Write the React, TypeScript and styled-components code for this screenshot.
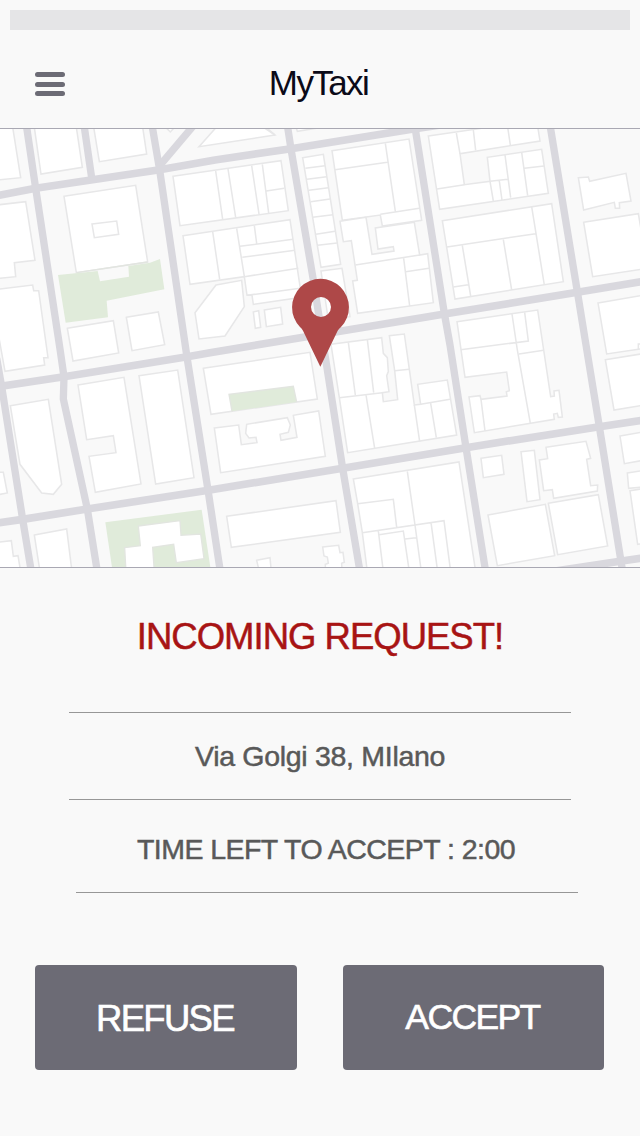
import React from "react";
import styled, { createGlobalStyle } from "styled-components";

const GlobalStyle = createGlobalStyle`
  *, *::before, *::after { box-sizing: border-box; }
  body {
    margin: 0;
    background: #f9f9f9;
    font-family: "Liberation Sans", Arial, Helvetica, sans-serif;
  }
`;

const Screen = styled.main`
  display: flex;
  flex-direction: column;
  width: 640px;
  height: 1136px;
  overflow: hidden;
  background: #f9f9f9;
`;

const StatusBar = styled.div`
  flex: none;
  height: 20px;
  margin: 10px 10px 0;
  background: #e5e5e7;
`;

const Header = styled.header`
  flex: none;
  display: grid;
  grid-template-columns: 100px 1fr 103px;
  height: 98px;
  padding-top: 32px;
`;

const MenuButton = styled.button`
  display: flex;
  flex-direction: column;
  justify-content: space-between;
  align-self: start;
  width: 30px;
  height: 24px;
  margin: 10px 0 0 35px;
  padding: 0;
  border: 0;
  background: none;
`;

const MenuBar = styled.span`
  height: 5px;
  border-radius: 2.5px;
  background: #6c6b75;
`;

const Title = styled.h1`
  margin: 1px 0 0;
  font-size: 35px;
  font-weight: 400;
  line-height: 40px;
  letter-spacing: -1.6px;
  text-align: center;
  color: #0b0a18;
`;

const MapFrame = styled.section`
  flex: none;
  height: 440px;
  border-top: 1px solid #a9a8b3;
  border-bottom: 1px solid #a9a8b3;
  overflow: hidden;
`;

const MapDrawing = styled.svg`
  display: block;
  width: 640px;
  height: 438px;
`;

const Request = styled.section`
  flex: none;
  display: flex;
  flex-direction: column;
  align-items: center;
  height: 325px;
`;

const Alert = styled.h2`
  margin: 49px 0 0;
  font-size: 36.5px;
  font-weight: 400;
  line-height: 40px;
  letter-spacing: -1px;
  white-space: nowrap;
  color: #a81414;
  -webkit-text-stroke: 0.5px #a81414;
`;

const Details = styled.div`
  width: 502px;
  margin-top: 55px;
  border-top: 1px solid #979797;
`;

const Detail = styled.p<{ $height: number; $shift?: number; $spacing: number; $drop?: number }>`
  height: ${(p) => p.$height}px;
  margin: 0 ${(p) => -(p.$shift ?? 0)}px 0 ${(p) => p.$shift ?? 0}px;
  padding-top: ${(p) => p.$drop ?? 0}px;
  padding-right: ${(p) => (p.$shift ? 2 : 0)}px;
  border-bottom: 1px solid #979797;
  font-size: 28.5px;
  line-height: 36px;
  letter-spacing: ${(p) => p.$spacing}px;
  text-align: center;
  white-space: nowrap;
  color: #595959;
  -webkit-text-stroke: 0.5px #595959;
`;

const Actions = styled.div`
  flex: none;
  display: grid;
  grid-template-columns: 262px 261px;
  gap: 46px;
  margin: 72px 0 0 35px;
`;

const ActionButton = styled.button<{ $size: number; $spacing: number; $drop?: number }>`
  height: 105px;
  padding: ${(p) => p.$drop ?? 0}px 2px 0 0;
  border: 0;
  border-radius: 4px;
  background: #6c6b75;
  color: #fff;
  font-family: inherit;
  font-size: ${(p) => p.$size}px;
  letter-spacing: ${(p) => p.$spacing}px;
  -webkit-text-stroke: 0.6px #fff;
`;

/* Map geometry is in thirds of a pixel. */
const avenues = [
  "M79 0L107 190L180 672L192 755L190 822L262 1152L292 1340",
  "M252 0L275 158",
  "M456 0L479 135L560 690L624 1095L661 1340",
  "M582 0L479 122",
  "M862 0L873 72L940 465L975 690L1028 1030L1080 1340",
  "M1244 0L1333 565L1350 660L1398 968L1457 1340",
  "M1650 0L1732 500L1758 660L1798 905L1868 1340",
  "M-10 700L5 785L68 1183L94 1340",
];

const streets = [
  "M-10 212L107 190L479 134L645 105L873 71L1240 12L1320 0",
  "M-10 786L192 755L562 695L630 683L1275 577L1333 567L1732 502L1930 469",
  "M-10 1194L68 1183L262 1152L630 1095L1028 1030L1398 968L1798 905L1930 885",
  "M1660 1339L1865 1308L1930 1299",
];

type Plot = { x: number; y: number; shapes: string[]; walls?: string[] };

const plots: Plot[] = [
  {
    x: 0,
    y: 0,
    shapes: [
      "-10,0 37,0 62,158 -10,165",
      "102,0 123,147 247,127 228,0",
      "280,0 298,110 440,87 427,0",
      "490,0 511,21 530,0",
      "655,0 597,65 825,30 790,0",
      "-10,240 77,230 105,406 43,413 47,455 -10,461",
      "-10,493 98,480 101,497 116,497 144,698 131,698 134,720 15,739 -10,600",
      "192,214 407,181 443,411 229,443",
      "276,297 350,288 356,328 283,338",
      "202,610 340,587 356,684 219,708",
      "379,577 475,561 494,659 396,677",
      "519,154 843,107 865,257 540,302",
      "549,332 870,284 905,517 760,538 756,511 741,511 733,455 570,478",
      "648,480 725,466 733,545 675,633 597,642 585,563",
    ],
  },
  {
    x: 630,
    y: 0,
    shapes: [
      "130,561 146,557 152,607 136,610",
      "163,555 212,547 218,597 169,605",
      "256,0 262,19 390,-2",
      "278,98 340,88 392,418 333,427",
      "333,438 396,430 420,575 355,585",
      "366,77 597,42 635,286 517,303 511,270 397,286",
      "390,289 468,277 486,388 552,378 550,365 504,372 496,309 613,292 629,390 653,386 670,533 443,565 428,468 442,466 424,347 400,350",
    ],
    walls: [
      "M17 138L38 283M54 132L77 277M125 122L147 267M157 118L176 264M169 198L223 190",
      "M8 320L29 463M80 310L103 455M133 302L140 355M90 364L249 343M97 397L255 376M103 455L265 430M111 511L270 490",
      "M286 130L345 122M291 163L350 155M297 196L355 188M302 230L360 222M308 277L369 269M318 328L375 319M323 361L381 354",
      "M526 55L556 259M375 134L532 112M511 268L628 250",
      "M436 420L629 390M581 400L599 543M587 440L657 430M165 10L195 30",
    ],
  },
  {
    x: 1275,
    y: 0,
    shapes: [
      "10,33 170,10 335,-15 345,48 105,86 118,179 195,169 187,97 350,73 370,205 44,253",
      "52,287 380,236 415,470 90,522",
      "460,158 490,156 494,169 603,145 618,228 583,233 584,250 571,250 568,232 476,255",
      "476,292 640,266 668,430 503,455",
      "519,534 670,508 670,668 545,687",
      "541,704 660,685 660,840 567,855",
    ],
    walls: [
      "M94 24L105 86M145 15L152 76M247 0L256 60M118 179L36 192M195 169L248 163M195 169L205 228M223 168L231 225M240 90L257 218M290 82L308 212M298 130L357 123",
      "M320 245L358 480M66 366L332 326M112 362L137 513M235 344L260 495M85 486L130 479",
      "M640 672V657H650",
    ],
  },
  {
    x: 0,
    y: 660,
    shapes: [
      "31,182 145,163 185,418 160,448 125,444 60,358",
      "234,120 372,97 423,417 286,442 267,334 348,323 340,272 260,284",
      "417,92 533,75 582,398 467,417",
      "-10,382 10,382 22,444 -10,450",
      "103,570 200,552 216,680 120,680",
      "-10,592 34,587 40,634 54,632 62,680 -10,680",
      "610,70 930,22 952,162 633,208",
    ],
  },
  {
    x: 630,
    y: 660,
    shapes: [
      "363,-2 515,-22 520,25 532,38 535,80 530,92 537,140 517,143 520,170 563,164 554,77 538,-28 583,-33 598,73 613,180 632,178 623,118 712,105 740,270 413,323 388,158",
      "13,249 86,240 94,299 141,293 138,277 117,279 107,265 110,238 232,218 241,240 235,262 210,268 213,286 261,277 250,211 326,198 346,334 32,383",
      "50,514 378,467 391,562 64,607",
      "140,646 180,638 184,680 148,680",
      "338,606 386,601 390,623 399,622 403,652 395,655 396,680 346,680 346,658 355,655 352,636 342,633",
      "430,402 747,351 797,680 472,680 457,563 443,476",
    ],
    walls: [
      "M415 -8L436 150M472 -16L491 143M388 158L517 143M468 150L494 310M554 77L598 73M613 180L629 290M632 178L720 163M662 175L679 278",
      "M443 476L550 463L560 547M457 563L702 527L722 680M592 379L615 540L634 680M505 558L520 680M507 569L580 558L598 680M585 582L618 578M663 532L683 680",
    ],
  },
  {
    x: 1275,
    y: 660,
    shapes: [
      "96,-70 338,-105 356,15 377,155 388,153 387,138 402,136 412,216 400,217 397,205 386,207 388,223 148,263 132,156 165,152 168,163 246,153 244,140 253,137 245,81 120,97",
      "168,340 230,331 237,388 175,398",
      "288,320 328,316 345,464 306,470",
      "363,307 483,289 497,340 485,343 497,422 518,420 517,438 386,460 382,434 356,437 343,345 368,341",
      "189,510 361,478 389,632 217,662",
      "370,475 520,449 548,603 398,629",
      "585,273 660,260 660,345 598,356",
      "607,384 660,376 660,425 611,430",
      "615,437 660,430 660,595 638,598",
    ],
    walls: ["M261 -93L277 15L316 235M299 -98L310 -12L107 14M282 27L356 16M168 163L180 258"],
  },
];

function CityMap() {
  return (
    <MapDrawing viewBox="0 12 1920 1314" aria-label="Map">
      <g fill="none" stroke="#d9d8de" strokeLinejoin="round">
        {avenues.map((d) => (
          <path key={d} d={d} strokeWidth={22} />
        ))}
        {streets.map((d) => (
          <path key={d} d={d} strokeWidth={23} />
        ))}
      </g>
      {plots.map((plot) => (
        <g
          key={`${plot.x}-${plot.y}`}
          transform={`translate(${plot.x} ${plot.y})`}
          fill="#fff"
          stroke="#e7e7e8"
          strokeWidth={4.6}
        >
          {plot.shapes.map((points) => (
            <polygon key={points} points={points} />
          ))}
          {plot.walls?.map((d) => (
            <path key={d} d={d} fill="none" />
          ))}
        </g>
      ))}
      <g fill="#e0ebda">
        <polygon points="174,450 293,438 300,469 387,455 385,423 450,413 480,402 493,493 320,527 324,577 197,593" />
        <polygon points="316,1192 605,1154 633,1340 338,1340" />
        <polygon points="687,808 880,784 890,831 696,859" />
      </g>
      <g fill="none" stroke="#e2e5e0" strokeWidth={4}>
        <path d="M229 443L443 411" />
        <path d="M696 859L687 808L880 784L890 831" />
        <path
          fill="#fff"
          d="M415 1203L540 1187L543 1231L602 1227L612 1301L529 1313L521 1258L458 1267L463 1340H378L374 1268L421 1262Z"
        />
      </g>
      <path
        fill="#ae4848"
        fillRule="evenodd"
        d="M961 725L909 617Q906 611 900 606A85.3 85.3 0 1 1 1023 606Q1017 611 1013 617ZM963 516A30 30 0 1 0 963 576A30 30 0 1 0 963 516Z"
      />
    </MapDrawing>
  );
}

export default function App() {
  return (
    <>
      <GlobalStyle />
      <Screen>
        <StatusBar />
        <Header>
          <MenuButton aria-label="Menu">
            <MenuBar />
            <MenuBar />
            <MenuBar />
          </MenuButton>
          <Title>MyTaxi</Title>
        </Header>
        <MapFrame>
          <CityMap />
        </MapFrame>
        <Request>
          <Alert>INCOMING REQUEST!</Alert>
          <Details>
            <Detail $height={87} $drop={25} $spacing={-0.3}>
              Via Golgi 38, MIlano
            </Detail>
            <Detail $height={93} $drop={31} $shift={7} $spacing={-0.55}>
              TIME LEFT TO ACCEPT : 2:00
            </Detail>
          </Details>
        </Request>
        <Actions>
          <ActionButton $size={36.5} $spacing={-1.7} $drop={2}>
            REFUSE
          </ActionButton>
          <ActionButton $size={35.5} $spacing={-1.6}>
            ACCEPT
          </ActionButton>
        </Actions>
      </Screen>
    </>
  );
}
